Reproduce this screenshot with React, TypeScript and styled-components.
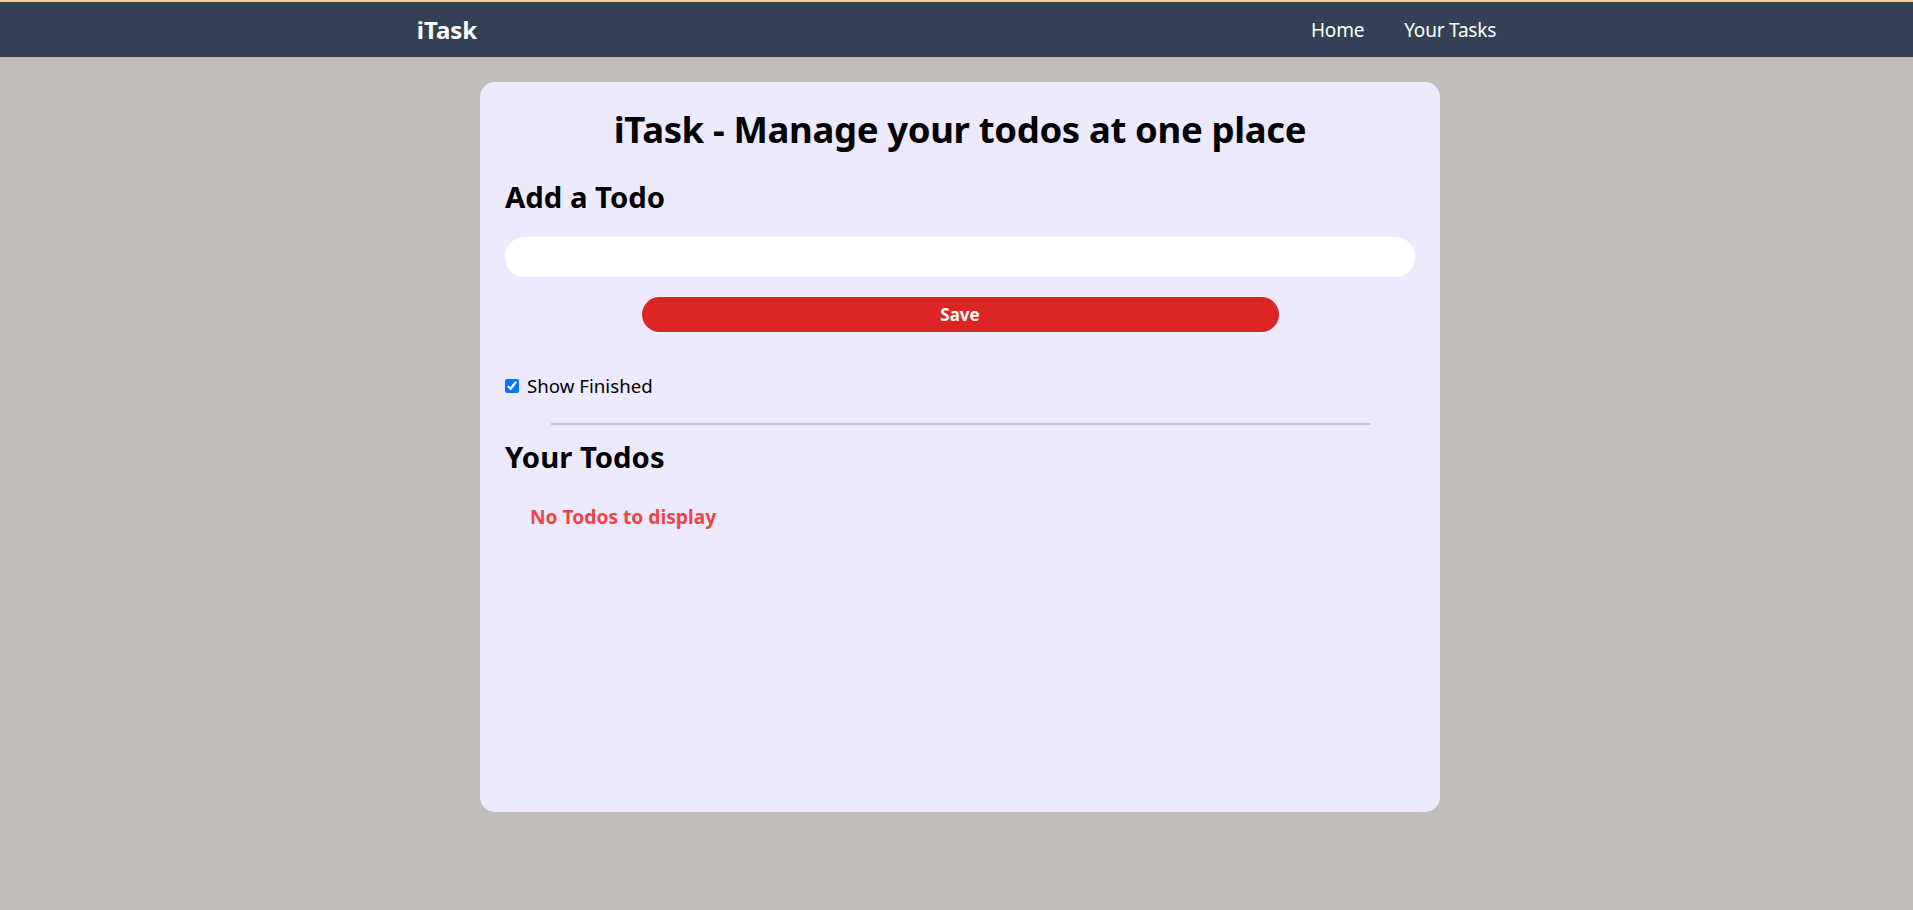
import React, { useState } from 'react'
import styled, { createGlobalStyle } from 'styled-components'

const GlobalStyle = createGlobalStyle`
  * { box-sizing: border-box; }
  body {
    margin: 0;
    background: #c2bcbb;
    font-family: 'Noto Sans', 'Open Sans', sans-serif;
    color: #000;
  }
`

const Nav = styled.nav`
  display: flex;
  justify-content: space-around;
  align-items: center;
  background: #334155;
  color: #fff;
  border-top: 2px solid #f3cf9f;
  padding: 10px 0;
`
const Logo = styled.span`
  font-weight: 700;
  font-size: 24px;
  line-height: 35px;
`
const NavLinks = styled.ul`
  display: flex;
  gap: 40px;
  list-style: none;
  margin: 0;
  padding: 0;
`
const NavLink = styled.li`
  font-size: 19px;
  line-height: 30px;
  letter-spacing: -0.2px;
  cursor: pointer;
`

const Main = styled.main`
  padding-left: 7px;
`
const Card = styled.section`
  width: 960px;
  min-height: 730px;
  margin: 25px auto;
  padding: 25px;
  border-radius: 15px;
  background: #ede9fe;
`
const Title = styled.h1`
  margin: 0;
  text-align: center;
  font-size: 36.5px;
  line-height: 45px;
  letter-spacing: -0.35px;
  font-weight: 700;
`
const AddSection = styled.div`
  display: flex;
  flex-direction: column;
  gap: 20px;
  margin: 25px 0 39px;
`
const Heading = styled.h2`
  margin: 0;
  font-size: 29.3px;
  line-height: 40px;
  font-weight: 700;
`
const TodoInput = styled.input`
  width: 100%;
  height: 40px;
  border: none;
  outline: none;
  border-radius: 999px;
  padding: 5px 25px;
  font-size: 20px;
  background: #fff;
`
const SaveButton = styled.button`
  width: 70%;
  height: 35px;
  margin: 0 auto;
  border: none;
  border-radius: 999px;
  background: #dc2626;
  color: #fff;
  font-family: inherit;
  font-size: 17px;
  font-weight: 700;
  cursor: pointer;
`
const CheckRow = styled.label`
  display: flex;
  align-items: center;
  gap: 8px;
  font-size: 18.7px;
  line-height: 30px;
`
const Check = styled.input`
  width: 14px;
  height: 14px;
  margin: 0;
  accent-color: #0075ff;
`
const Divider = styled.div`
  width: 90%;
  height: 2px;
  margin: 22px auto 12px;
  background: #c6c3d3;
`
const Empty = styled.div`
  margin: 25px;
  font-size: 19.2px;
  line-height: 30px;
  font-weight: 700;
  color: #ef4444;
`

export default function App() {
  const [todo, setTodo] = useState('')
  const [showFinished, setShowFinished] = useState(true)

  return (
    <>
      <GlobalStyle />
      <Nav>
        <Logo>iTask</Logo>
        <NavLinks>
          <NavLink>Home</NavLink>
          <NavLink>Your Tasks</NavLink>
        </NavLinks>
      </Nav>
      <Main>
        <Card>
          <Title>iTask - Manage your todos at one place</Title>
          <AddSection>
            <Heading>Add a Todo</Heading>
            <TodoInput value={todo} onChange={e => setTodo(e.target.value)} />
            <SaveButton>Save</SaveButton>
          </AddSection>
          <CheckRow>
            <Check type="checkbox" checked={showFinished} onChange={() => setShowFinished(!showFinished)} />
            Show Finished
          </CheckRow>
          <Divider />
          <Heading>Your Todos</Heading>
          <Empty>No Todos to display</Empty>
        </Card>
      </Main>
    </>
  )
}
